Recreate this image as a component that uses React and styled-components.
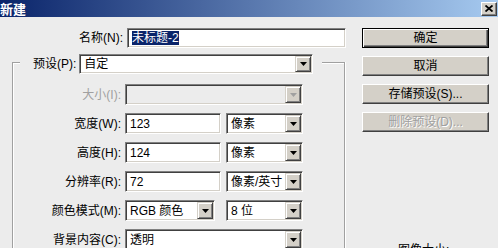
import React from 'react';
import styled, { createGlobalStyle } from 'styled-components';

const Global = createGlobalStyle`
  html, body { margin: 0; padding: 0; background: #ececec; overflow: hidden; }
  body {
    font-family: "Liberation Sans", "Noto Sans CJK SC", sans-serif;
    font-size: 12px;
    color: #000;
  }
`;

const Window = styled.div`
  width: 498px;
  height: 248px;
  overflow: hidden;
  background: #ececec;
`;

const TitleBar = styled.div`
  height: 17px;
  display: flex;
  align-items: center;
  justify-content: space-between;
  padding-right: 1px;
  background: linear-gradient(to right, #0a246a, #a6caf0);
`;

const Title = styled.span`
  color: #fff;
  font-weight: bold;
  font-size: 13px;
  line-height: 17px;
  font-family: "Noto Sans CJK SC", sans-serif;
`;

const CloseBtn = styled.div`
  box-sizing: border-box;
  width: 16px;
  height: 14px;
  background: #d4d0c8;
  border: 1px solid;
  border-color: #fff #404040 #404040 #fff;
  box-shadow: inset -1px -1px #808080;
  display: flex;
  align-items: center;
  justify-content: center;
`;

const Body = styled.div`
  display: flex;
`;

const LeftCol = styled.div`
  width: 350px;
  padding-top: 11px;
`;

const RightCol = styled.div`
  margin-left: 12px;
  width: 127px;
  padding-top: 11px;
  display: flex;
  flex-direction: column;
  gap: 8px;
`;

const FieldRow = styled.div`
  display: grid;
  grid-template-columns: ${p => p.$label}px auto;
  column-gap: 4px;
  align-items: center;
  height: ${p => p.$h || 21}px;
`;

const Label = styled.span`
  text-align: right;
  white-space: nowrap;
  line-height: 1;
  color: ${p => (p.$disabled ? '#a0a0a0' : '#000')};
`;

const Controls = styled.div`
  display: flex;
  align-items: center;
  gap: ${p => p.$gap || 5}px;
`;

const Field = styled.div`
  box-sizing: border-box;
  width: ${p => p.$w}px;
  height: ${p => p.$h || 21}px;
  background: ${p => (p.$disabled ? '#ececec' : '#fff')};
  border: 1px solid;
  border-color: #808080 #fff #fff #808080;
  box-shadow: inset 1px 1px #404040, inset -1px -1px #d4d0c8;
  padding: 1px;
  display: flex;
  align-items: stretch;
`;

const FieldText = styled.span`
  flex: 1;
  padding-left: 3px;
  display: flex;
  align-items: center;
  white-space: nowrap;
  overflow: hidden;
  line-height: 1;
`;

const Selected = styled.span`
  background: #0a246a;
  color: #fff;
  padding: 1px 0;
`;

const DropBtn = styled.span`
  box-sizing: border-box;
  width: 16px;
  flex: none;
  background: #d4d0c8;
  border: 1px solid;
  border-color: #d4d0c8 #404040 #404040 #d4d0c8;
  box-shadow: inset 1px 1px #fff, inset -1px -1px #808080;
  display: flex;
  align-items: center;
  justify-content: center;
`;

const GroupBox = styled.div`
  margin: 14px 0 0 12px;
  width: 333px;
  box-sizing: border-box;
  border: 1px solid #a0a0a0;
  border-bottom: none;
  box-shadow: inset 1px 1px #fff, 1px 0 #fff;
  padding: 0 0 20px 1px;
  display: flex;
  flex-direction: column;
  gap: 8px;
`;

const Legend = styled.div`
  margin: -9px 0 2px 6px;
  width: 302px;
  box-sizing: border-box;
  height: 20px;
  padding: 0 8px 0 13px;
  background: #ececec;
  display: flex;
  align-items: center;
  gap: 3px;
`;

const Button = styled.div`
  box-sizing: border-box;
  width: 127px;
  height: 20px;
  background: #d4d0c8;
  display: flex;
  align-items: center;
  justify-content: center;
  line-height: 1;
  border: 1px solid;
  border-color: ${p => (p.$default ? '#000' : '#fff #404040 #404040 #fff')};
  box-shadow: ${p =>
    p.$default
      ? 'inset 1px 1px #fff, inset -1px -1px #404040, inset -2px -2px #808080'
      : 'inset -1px -1px #808080'};
  color: ${p => (p.$disabled ? '#a0a0a0' : '#000')};
  text-shadow: ${p => (p.$disabled ? '1px 1px #fff' : 'none')};
`;

const InfoText = styled.div`
  margin-top: 104px;
  padding-left: 36px;
  line-height: 1;
  white-space: nowrap;
`;

const Arrow = ({ disabled }) => (
  <svg width="7" height="4" viewBox="0 0 7 4">
    <polygon points="0,0 7,0 3.5,4" fill={disabled ? '#a0a0a0' : '#000'} />
  </svg>
);

const Select = ({ w, h, disabled, children }) => (
  <Field $w={w} $h={h} $disabled={disabled}>
    <FieldText>{children}</FieldText>
    <DropBtn>
      <Arrow disabled={disabled} />
    </DropBtn>
  </Field>
);

const Input = ({ w, h, children }) => (
  <Field $w={w} $h={h}>
    <FieldText>{children}</FieldText>
  </Field>
);

export default function App() {
  return (
    <Window>
      <Global />
      <TitleBar>
        <Title>新建</Title>
        <CloseBtn>
          <svg width="8" height="7" viewBox="0 0 8 7">
            <path d="M0.5 0.5 L7.5 6.5 M7.5 0.5 L0.5 6.5" stroke="#000" strokeWidth="1.8" />
          </svg>
        </CloseBtn>
      </TitleBar>
      <Body>
        <LeftCol>
          <FieldRow $label={123} $h={20}>
            <Label>名称(N):</Label>
            <Input w={219} h={20}>
              <Selected>未标题-2</Selected>
            </Input>
          </FieldRow>
          <GroupBox>
            <Legend>
              <Label>预设(P):</Label>
              <Select w={234} h={20}>自定</Select>
            </Legend>
            <FieldRow $label={107}>
              <Label $disabled>大小(I):</Label>
              <Select w={178} disabled />
            </FieldRow>
            <FieldRow $label={107}>
              <Label>宽度(W):</Label>
              <Controls>
                <Input w={96}>123</Input>
                <Select w={77}>像素</Select>
              </Controls>
            </FieldRow>
            <FieldRow $label={107}>
              <Label>高度(H):</Label>
              <Controls>
                <Input w={96}>124</Input>
                <Select w={77}>像素</Select>
              </Controls>
            </FieldRow>
            <FieldRow $label={107}>
              <Label>分辨率(R):</Label>
              <Controls>
                <Input w={96}>72</Input>
                <Select w={77}>像素/英寸</Select>
              </Controls>
            </FieldRow>
            <FieldRow $label={107}>
              <Label>颜色模式(M):</Label>
              <Controls $gap={11}>
                <Select w={90}>RGB 颜色</Select>
                <Select w={77}>8 位</Select>
              </Controls>
            </FieldRow>
            <FieldRow $label={107}>
              <Label>背景内容(C):</Label>
              <Select w={178}>透明</Select>
            </FieldRow>
          </GroupBox>
        </LeftCol>
        <RightCol>
          <Button $default>确定</Button>
          <Button>取消</Button>
          <Button>存储预设(S)...</Button>
          <Button $disabled>删除预设(D)...</Button>
          <InfoText>图像大小:</InfoText>
        </RightCol>
      </Body>
    </Window>
  );
}
